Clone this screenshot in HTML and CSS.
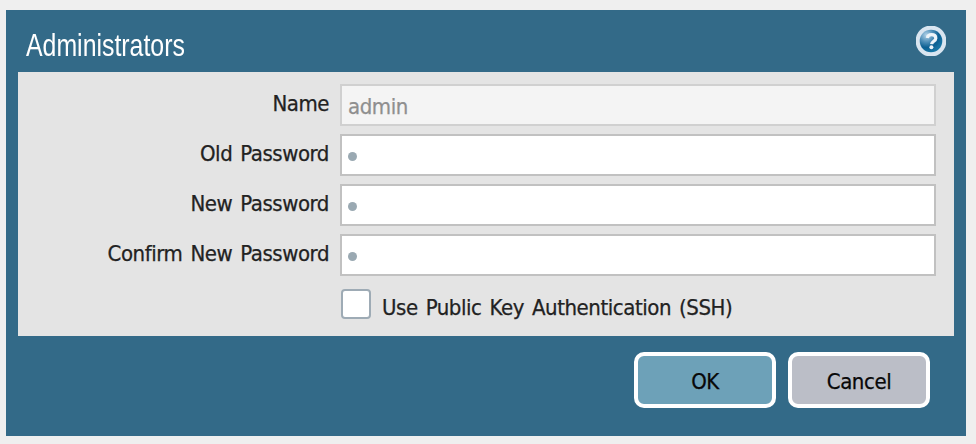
FILE: index.html
```html
<!DOCTYPE html>
<html lang="en">
<head>
<meta charset="utf-8">
<title>Administrators</title>
<link rel="stylesheet" href="styles.css">
</head>
<body>
<form class="dialog">
  <header class="header">
    <h1 class="title">Administrators</h1>
    <svg class="help" viewBox="0 0 30 30" role="img" aria-label="Help">
      <defs>
        <radialGradient id="orb" cx="30%" cy="24%" r="78%">
          <stop offset="0" stop-color="#b4d3e8"/>
          <stop offset=".4" stop-color="#4b8db7"/>
          <stop offset=".7" stop-color="#0d6093"/>
          <stop offset="1" stop-color="#1776a5"/>
        </radialGradient>
        <filter id="soft" x="0" y="0" width="100%" height="100%"><feGaussianBlur stdDeviation=".7"/></filter>
      </defs>
      <g filter="url(#soft)">
        <circle cx="15" cy="15" r="15.4" fill="#d9e5f0"/>
        <circle cx="15" cy="15" r="11.3" fill="url(#orb)"/>
        <path d="M11.3 12c.4-2.2 2-3.3 4.2-3.3 2.6 0 4.3 1.3 4.3 3.5 0 3.1-4 2.9-4.2 5.9" fill="none" stroke="#edf4f9" stroke-width="3.2"/>
        <circle cx="15.4" cy="21.3" r="2" fill="#edf4f9"/>
      </g>
    </svg>
  </header>
  <main class="panel">
    <div class="row"><label class="label" for="name">Name</label><input class="field" id="name" type="text" value="admin" disabled></div>
    <div class="row"><label class="label">Old Password</label><div class="field"><span class="dot"></span></div></div>
    <div class="row"><label class="label">New Password</label><div class="field"><span class="dot"></span></div></div>
    <div class="row"><label class="label">Confirm New Password</label><div class="field"><span class="dot"></span></div></div>
    <div class="check-row"><span class="checkbox"></span><span class="check-label">Use Public Key Authentication (SSH)</span></div>
  </main>
  <footer class="footer">
    <button class="button ok" type="button">OK</button>
    <button class="button cancel" type="button">Cancel</button>
  </footer>
</form>
</body>
</html>
```
FILE: styles.css
```css
* { box-sizing: border-box; }
body {
  margin: 0;
  padding: 10px 10px 8px 6px;
  height: 444px;
  background: #efefef;
  color: #222;
  font: 22px/30px "DejaVu Sans Condensed", "DejaVu Sans", sans-serif;
  font-stretch: condensed;
  letter-spacing: -0.45px;
  word-spacing: 2.2px;
  -webkit-text-stroke: 0.25px currentColor;
  overflow: hidden;
}
.dialog {
  height: 426px;
  padding: 0 12px;
  background: #336a88;
}
.header {
  display: flex;
  justify-content: space-between;
  height: 62px;
  padding: 16px 8px 0;
}
.title {
  margin: 0;
  color: #fff;
  font: 400 30.5px/38px "Liberation Sans", sans-serif;
  letter-spacing: 0;
  -webkit-text-stroke: 0;
  transform: scaleX(.815);
  transform-origin: left;
}
.help { width: 30px; height: 30px; }
.panel {
  height: 264px;
  padding: 12px 18px 0 0;
  background: #e4e4e4;
}
.row {
  display: flex;
  height: 42px;
  margin-bottom: 8px;
}
.label {
  width: 311px;
  margin-right: 11px;
  padding-top: 5px;
  text-align: right;
  white-space: nowrap;
}
.field {
  display: flex;
  align-items: center;
  width: 596px;
  height: 42px;
  margin: 0;
  padding: 2px 6px 0;
  border: 2px solid #c1c1c1;
  border-radius: 0;
  background: #fff;
  font: inherit;
  letter-spacing: inherit;
}
.field:disabled {
  border-color: #d0d0d0;
  background: #f4f4f4;
  color: #8f8f8f;
}
.dot {
  width: 9px;
  height: 9px;
  border-radius: 50%;
  background: #9aa9b2;
}
.check-row {
  display: flex;
  padding: 5px 0 0 323px;
}
.checkbox {
  width: 30px;
  height: 30px;
  border: 2px solid #9eabb5;
  border-radius: 4px;
  background: #fff;
}
.check-label {
  margin: 4px 0 0 11px;
  white-space: nowrap;
}
.footer {
  display: flex;
  justify-content: flex-end;
  gap: 12px;
  padding: 16px 24px 0 0;
}
.button {
  width: 142px;
  height: 56px;
  padding: 3px 0 0;
  border: 4px solid #fff;
  border-radius: 10px;
  color: #080808;
  font: inherit;
  letter-spacing: inherit;
}
.ok { background: #6da1b8; }
.cancel { background: #bbbec7; }
```
